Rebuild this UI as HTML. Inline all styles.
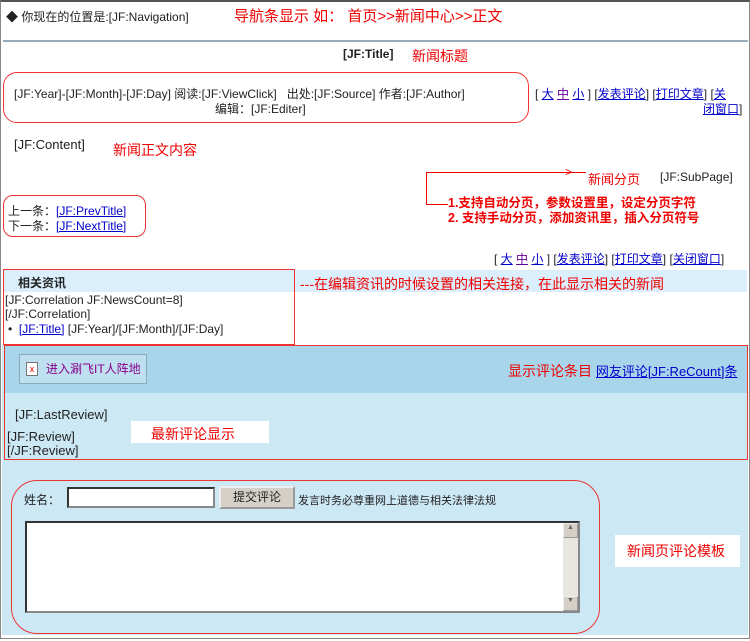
<!DOCTYPE html>
<html><head><meta charset="utf-8"><style>
body{margin:0;width:750px;height:641px;position:relative;background:#fff;font-family:"Liberation Sans","Noto Sans CJK SC",sans-serif;font-size:12px;color:#222;overflow:hidden}
.a{position:absolute;white-space:nowrap}
.r{color:#e00}
a,.l{color:#00c;text-decoration:underline}
</style></head><body>
<div class="a" style="left:0;top:0;width:748px;height:636px;border:1px solid #888;border-top:2px solid #555"></div>
<div class="a" style="left:6px;top:8px;font-size:12px">◆ 你现在的位置是:[JF:Navigation]</div>
<div class="a r" style="left:234px;top:5px;font-size:15px">导航条显示 如： 首页&gt;&gt;新闻中心&gt;&gt;正文</div>
<div class="a" style="left:3px;top:40px;width:745px;height:2px;background:#9ab"></div>
<div class="a" style="left:343px;top:47px;font-weight:bold">[JF:Title]</div>
<div class="a r" style="left:412px;top:46px;font-size:14px">新闻标题</div>
<div class="a" style="left:3px;top:72px;width:524px;height:49px;border:1px solid #e33;border-radius:14px"></div>
<div class="a" style="left:14px;top:85px">[JF:Year]-[JF:Month]-[JF:Day] 阅读:[JF:ViewClick] &nbsp; 出处:[JF:Source] 作者:[JF:Author]</div>
<div class="a" style="left:215px;top:100px">编辑：[JF:Editer]</div>
<div class="a" style="left:535px;top:85px">[ <span class="l">大</span> <span class="l" style="color:#609">中</span> <span class="l">小</span> ] [<span class="l">发表评论</span>] [<span class="l">打印文章</span>] [<span class="l">关</span></div>
<div class="a" style="left:703px;top:100px"><span class="l">闭窗口</span>]</div>
<div class="a" style="left:14px;top:137px;font-size:13px">[JF:Content]</div>
<div class="a r" style="left:113px;top:140px;font-size:14px">新闻正文内容</div>
<div class="a" style="left:426px;top:172px;width:160px;height:1px;background:#e00"></div>
<div class="a" style="left:426px;top:172px;width:1px;height:33px;background:#e00"></div>
<div class="a" style="left:426px;top:204px;width:22px;height:1px;background:#e00"></div>
<div class="a r" style="left:565px;top:165px;font-size:12px">&gt;</div>
<div class="a r" style="left:588px;top:169px;font-size:13px">新闻分页</div>
<div class="a" style="left:660px;top:170px;font-size:12px">[JF:SubPage]</div>
<div class="a r" style="left:448px;top:192px;font-size:12.5px;font-weight:bold">1.支持自动分页，参数设置里，设定分页字符</div>
<div class="a r" style="left:448px;top:207px;font-size:12.5px;font-weight:bold">2. 支持手动分页，添加资讯里，插入分页符号</div>
<div class="a" style="left:3px;top:195px;width:141px;height:40px;border:1px solid #e33;border-radius:10px"></div>
<div class="a" style="left:8px;top:202px">上一条：<span class="l">[JF:PrevTitle]</span></div>
<div class="a" style="left:8px;top:217px">下一条：<span class="l">[JF:NextTitle]</span></div>
<div class="a" style="left:494px;top:250px">[ <span class="l">大</span> <span class="l" style="color:#609">中</span> <span class="l">小</span> ] [<span class="l">发表评论</span>] [<span class="l">打印文章</span>] [<span class="l">关闭窗口</span>]</div>
<div class="a" style="left:3px;top:270px;width:744px;height:22px;background:#dbeefc"></div>
<div class="a" style="left:3px;top:269px;width:290px;height:74px;border:1px solid #e33"></div>
<div class="a" style="left:18px;top:274px;font-weight:bold">相关资讯</div>
<div class="a r" style="left:300px;top:274px;font-size:14px">---在编辑资讯的时候设置的相关连接，在此显示相关的新闻</div>
<div class="a" style="left:5px;top:293px">[JF:Correlation JF:NewsCount=8]</div>
<div class="a" style="left:5px;top:307px">[/JF:Correlation]</div>
<div class="a" style="left:8px;top:322px">• &nbsp;<span class="l">[JF:Title]</span> [JF:Year]/[JF:Month]/[JF:Day]</div>
<div class="a" style="left:2px;top:345px;width:746px;height:290px;background:#cde8f5"></div>
<div class="a" style="left:4px;top:346px;width:744px;height:47px;background:#a9d5ea"></div>
<div class="a" style="left:4px;top:345px;width:742px;height:113px;border:1px solid #e33"></div>
<div class="a" style="left:19px;top:354px;width:126px;height:28px;border:1px solid #8ab;background:#bfe0f0"></div>
<div class="a" style="left:26px;top:362px;width:10px;height:12px;background:#fff;border:1px solid #777;color:#e00;font-size:9px;text-align:center;line-height:12px">x</div>
<div class="a" style="left:46px;top:360px;color:#808;font-size:12px">进入涮飞IT人阵地</div>
<div class="a r" style="left:508px;top:361px;font-size:14px">显示评论条目 <span class="l" style="font-size:13px">网友评论[JF:ReCount]条</span></div>
<div class="a" style="left:15px;top:407px;font-size:13px">[JF:LastReview]</div>
<div class="a" style="left:131px;top:421px;width:138px;height:22px;background:#fff"></div>
<div class="a r" style="left:151px;top:424px;font-size:14px">最新评论显示</div>
<div class="a" style="left:7px;top:429px;font-size:13px">[JF:Review]</div>
<div class="a" style="left:7px;top:443px;font-size:13px">[/JF:Review]</div>
<div class="a" style="left:11px;top:480px;width:587px;height:152px;border:1px solid #e33;border-radius:26px"></div>
<div class="a" style="left:24px;top:491px">姓名：</div>
<div class="a" style="left:67px;top:487px;width:144px;height:17px;background:#fff;border:2px inset #888"></div>
<div class="a" style="left:219px;top:486px;width:72px;height:19px;background:#d4d0c8;border:2px outset #eee;text-align:center;font-size:12px;line-height:19px">提交评论</div>
<div class="a" style="left:298px;top:492px;font-size:11px">发言时务必尊重网上道德与相关法律法规</div>
<div class="a" style="left:25px;top:521px;width:551px;height:88px;background:#fff;border:2px inset #888"></div>
<div class="a" style="left:563px;top:523px;width:15px;height:88px;background:#e8e6e0"></div>
<div class="a" style="left:563px;top:523px;width:13px;height:13px;background:#d4d0c8;border:1px outset #eee;font-size:7px;text-align:center;color:#666">▲</div>
<div class="a" style="left:563px;top:596px;width:13px;height:13px;background:#d4d0c8;border:1px outset #eee;font-size:7px;text-align:center;color:#666">▼</div>
<div class="a" style="left:615px;top:535px;width:125px;height:32px;background:#fff"></div>
<div class="a r" style="left:627px;top:541px;font-size:14px">新闻页评论模板</div>
</body></html>
